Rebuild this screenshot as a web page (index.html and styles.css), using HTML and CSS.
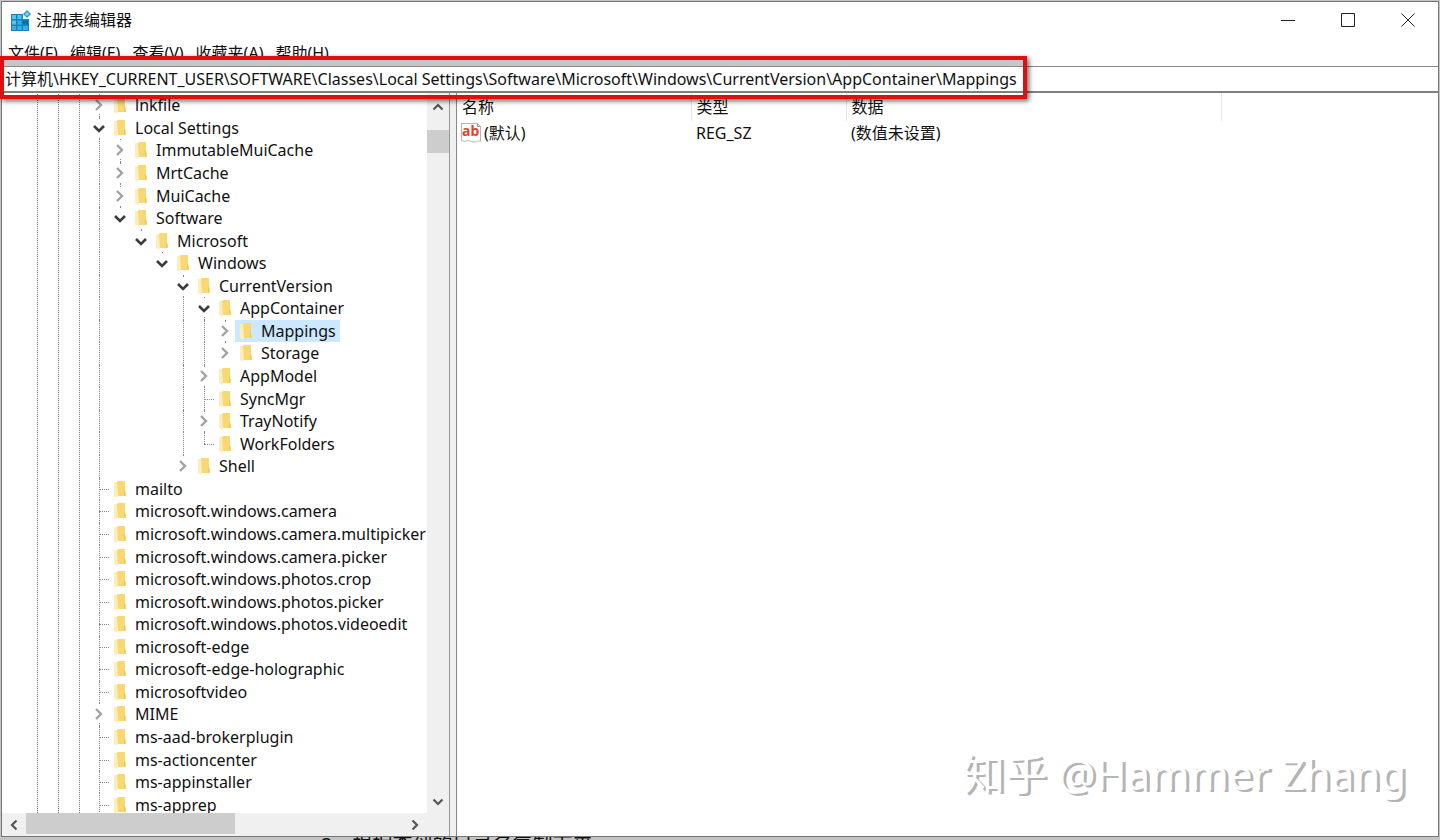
FILE: index.html
```html
<!DOCTYPE html>
<html lang="zh-CN">
<head>
    <meta charset="UTF-8">
    <meta name="viewport" content="width=device-width, initial-scale=1.0">
    <title>注册表编辑器</title>
    <link rel="stylesheet" href="styles.css">
</head>
<body>
    <svg width="0" height="0" class="sprites" aria-hidden="true">
        <symbol id="folder" viewBox="0 0 14 18">
            <path d="M1 2h6v14l-6-1z" fill="#fbe8a6"/>
            <path d="M5 1h7v10l1 1v4H4V2z" fill="#f8d775"/>
            <path d="M1 2h3l1 14-1 2-3-2z" fill="#fdeeb9"/>
            <path d="M11 10h1v6h-1z" fill="#f0c558"/>
        </symbol>
        <symbol id="closed" viewBox="0 0 14 14">
            <path d="M4 2l5 5-5 5" fill="none" stroke="#a2a2a2" stroke-width="2.4"/>
        </symbol>
        <symbol id="open" viewBox="0 0 14 14">
            <path d="M2 5l5 5 5-5" fill="none" stroke="#3c3c3c" stroke-width="2.6"/>
        </symbol>
        <symbol id="arrow" viewBox="0 0 14 14">
            <path d="M2.500 9.500L7 5l4.500 4.500" fill="none" stroke="#555" stroke-width="2.2"/>
        </symbol>
    </svg>

    <div class="window">
        <header class="titlebar">
            <svg class="app-icon" viewBox="0 0 22 22" aria-hidden="true">
                <path d="M1 4h12v5h6v12H1z" fill="#1286c4"/>
                <path d="M2 5h4v4H2zM2 10.500h4v4H2zM7.500 5h4v4h-4z" fill="#55c3ee"/>
                <path d="M7.500 10.500h4v4h-4zM2 16h4v4H2zM7.500 16h4v4h-4zM13 16h5v4h-5z" fill="#38aee2"/>
                <path d="M13 10.500h5v4h-5z" fill="#0b6fae"/>
                <path d="M17 0l4 4-4 4-4-4z" fill="#2a9ad2"/>
                <path d="M17 2l2 2-2 2-2-2z" fill="#8ed6f3"/>
            </svg>
            <h1>注册表编辑器</h1>
            <div class="controls">
                <button type="button" aria-label="最小化"><svg viewBox="0 0 14 14"><path d="M0 7.500h14"/></svg></button>
                <button type="button" aria-label="最大化"><svg viewBox="0 0 14 14"><path d="M.5.5h13v13H.5z"/></svg></button>
                <button type="button" aria-label="关闭"><svg viewBox="0 0 14 14"><path d="M.5.5l13 13M13.500.5l-13 13"/></svg></button>
            </div>
        </header>

        <nav class="menu">
            <button type="button">文件(F)</button>
            <button type="button">编辑(E)</button>
            <button type="button">查看(V)</button>
            <button type="button">收藏夹(A)</button>
            <button type="button">帮助(H)</button>
        </nav>

        <div class="address">
            <input type="text" aria-label="地址" value="计算机\HKEY_CURRENT_USER\SOFTWARE\Classes\Local Settings\Software\Microsoft\Windows\CurrentVersion\AppContainer\Mappings">
            <div class="highlight"></div>
        </div>

        <main class="panes">
            <section class="left">
                <ul class="tree" id="tree"></ul>
                <div class="vbar">
                    <button type="button" aria-label="向上"><svg><use href="#arrow"/></svg></button>
                    <div class="track"><div class="thumb"></div></div>
                    <button type="button" class="down" aria-label="向下"><svg><use href="#arrow"/></svg></button>
                </div>
                <div class="hbar">
                    <button type="button" class="prev" aria-label="向左"><svg><use href="#arrow"/></svg></button>
                    <div class="track"><div class="thumb"></div></div>
                    <button type="button" class="next" aria-label="向右"><svg><use href="#arrow"/></svg></button>
                </div>
            </section>

            <section class="right">
                <table>
                    <colgroup>
                        <col class="c-name"><col class="c-type"><col class="c-data"><col>
                    </colgroup>
                    <thead>
                        <tr><th>名称</th><th>类型</th><th>数据</th><td></td></tr>
                    </thead>
                    <tbody>
                        <tr>
                            <td class="name">
                                <svg viewBox="0 0 22 22" aria-hidden="true">
                                    <path d="M1.500 1.500h16l3 3v15c-3-2-5 2-9 0s-6 1-10-1z" fill="#fff" stroke="#b4b4b4"/>
                                    <path d="M17.500 1.500v3h3" fill="none" stroke="#999"/>
                                    <text x="2" y="14">ab</text>
                                </svg>
                                <span>(默认)</span>
                            </td>
                            <td>REG_SZ</td>
                            <td>(数值未设置)</td>
                            <td></td>
                        </tr>
                    </tbody>
                </table>
                <p class="watermark">知乎 @Hammer Zhang</p>
            </section>
        </main>
    </div>
    <div class="behind">2、根据查到的目录名复制下来</div>

    <script src="tree.js"></script>
</body>
</html>
```
FILE: styles.css
```css
* {
  box-sizing: border-box;
}

body {
  margin: 0;
  height: 100vh;
  display: flex;
  flex-direction: column;
  overflow: hidden;
  padding: 1px 1px 0;
  background-color: #c4c4c4;
  font-family: "Noto Sans", "Noto Sans CJK SC", sans-serif;
  font-size: 16px;
  color: #111;
}

button {
  border: none;
  background: none;
  padding: 0;
  font: inherit;
  color: inherit;
}

.sprites {
  position: absolute;
}

.window {
  flex: 1;
  min-height: 0;
  display: flex;
  flex-direction: column;
  border: 1px solid #777;
  background-color: #fff;
}

.titlebar {
  display: flex;
  align-items: center;
  height: 38px;
  padding-left: 8px;
}

.app-icon {
  width: 22px;
  height: 22px;
}

h1 {
  margin: 0 0 4px 4px;
  font-size: 16px;
  font-weight: normal;
}

.controls {
  margin-left: auto;
  display: flex;
}

.controls button {
  width: 60px;
  height: 38px;
}

.controls svg {
  width: 14px;
  height: 14px;
  fill: none;
  stroke: #222;
}

.menu {
  display: flex;
  gap: 12px;
  height: 26px;
  padding-left: 6px;
  line-height: 24px;
}

/* address bar */
.address {
  position: relative;
  height: 27px;
  border-top: 1px solid #888;
  border-bottom: 2px solid #808080;
}

.address input {
  display: block;
  width: 100%;
  height: 24px;
  border: none;
  outline: none;
  padding: 0 3px 2px;
  font: inherit;
  color: inherit;
}

.highlight {
  position: absolute;
  z-index: 1;
  left: -2px;
  top: -11px;
  width: 1027px;
  height: 43px;
  border: 4px solid #dc1010;
  box-shadow: 2px 2px 5px rgba(0, 0, 0, 0.6);
}

.highlight::before {
  content: "";
  display: block;
  height: 6px;
  background-color: #c6c6c6;
}

.panes {
  flex: 1;
  min-height: 0;
  display: flex;
  background-color: #f0f0f0;
}

.left {
  width: 448px;
  display: grid;
  grid-template-columns: 1fr 22px;
  grid-template-rows: minmax(0, 1fr) 23px;
  border-right: 1px solid #999;
}

/* tree */
.tree {
  list-style: none;
  margin: 0 0 -3px;
  padding: 1px 0 0;
  overflow: hidden;
  display: grid;
  grid-auto-rows: 1fr;
  background-color: #fff;
  background-image:
    repeating-linear-gradient(#fff 0 1px, transparent 1px 2px),
    linear-gradient(90deg, transparent 35px, #777 35px 36px, transparent 36px 56px, #777 56px 57px, transparent 57px 77px, #777 77px 78px, transparent 78px);
}

.row {
  display: flex;
  align-items: center;
  min-height: 0;
  padding-left: 86px;
  white-space: nowrap;
}

.cell {
  position: relative;
  flex: none;
  width: 21px;
  height: 100%;
  display: flex;
  align-items: center;
  justify-content: center;
}

.cell.line::before {
  content: "";
  position: absolute;
  left: 11px;
  top: 0;
  bottom: 0;
  border-left: 1px dotted #888;
}

.cell.line.last::before {
  bottom: 50%;
}

.cell.leaf::after {
  content: "";
  position: absolute;
  left: 11px;
  right: 0;
  top: 50%;
  border-top: 1px dotted #888;
}

.cell svg {
  position: relative;
  width: 14px;
  height: 18px;
  background-color: #fff;
}

.item {
  display: flex;
  align-items: center;
  height: 100%;
  padding: 0 4px;
}

.item svg {
  width: 14px;
  height: 18px;
  margin-right: 8px;
}

.item.selected {
  background-color: #cce8ff;
}

/* scrollbars */
.vbar,
.hbar {
  display: flex;
  background-color: #f0f0f0;
}

.vbar {
  flex-direction: column;
  padding-top: 3px;
}

.hbar {
  position: relative;
  grid-column: 1 / 3;
  padding-right: 22px;
}

.vbar svg,
.hbar svg {
  display: block;
  width: 14px;
  height: 14px;
  margin: auto;
}

.vbar button {
  height: 22px;
}

.hbar button {
  width: 24px;
}

.track {
  flex: 1;
}

.thumb {
  background-color: #cdcdcd;
}

.vbar .thumb {
  height: 23px;
  margin-top: 12px;
}

.hbar .thumb {
  width: 209px;
  height: 21px;
}

.down svg {
  transform: rotate(180deg);
}

.prev svg {
  transform: rotate(-90deg);
}

.next svg {
  transform: rotate(90deg);
}

/* values */
.right {
  flex: 1;
  display: flex;
  flex-direction: column;
  margin-left: 6px;
  border-left: 1px solid #888;
  background-color: #fff;
}

table {
  width: 100%;
  table-layout: fixed;
  border-collapse: collapse;
  line-height: 24px;
}

.c-name {
  width: 234px;
}

.c-type {
  width: 155px;
}

.c-data {
  width: 375px;
}

th,
td {
  height: 24px;
  padding: 0 0 0 5px;
  text-align: left;
  font-weight: normal;
  white-space: nowrap;
}

th {
  height: 28px;
  border-right: 1px solid #e5e5e5;
}

.name {
  display: flex;
  align-items: center;
  padding-left: 3px;
}

.name svg {
  width: 22px;
  height: 22px;
  margin-right: 2px;
}

.name text {
  font-family: "Noto Sans", sans-serif;
  font-size: 14px;
  font-weight: bold;
  fill: #e0452c;
}

.watermark {
  margin: auto 32px 32px auto;
  font-size: 42px;
  line-height: 60px;
  color: #fff;
  text-shadow: 3px 2px 0 #b4b4b4;
}

/* page showing below the window */
.behind {
  height: 3px;
  overflow: hidden;
  padding-left: 320px;
  font-size: 20px;
  line-height: 16px;
}
```
FILE: tree.js
```js
// [depth, state, name]: "+" closed, "-" open, "" no children
const keys = [
  [0, '+', 'lnkfile'],
  [0, '-', 'Local Settings'],
  [1, '+', 'ImmutableMuiCache'],
  [1, '+', 'MrtCache'],
  [1, '+', 'MuiCache'],
  [1, '-', 'Software'],
  [2, '-', 'Microsoft'],
  [3, '-', 'Windows'],
  [4, '-', 'CurrentVersion'],
  [5, '-', 'AppContainer'],
  [6, '+', 'Mappings'],
  [6, '+', 'Storage'],
  [5, '+', 'AppModel'],
  [5, '', 'SyncMgr'],
  [5, '+', 'TrayNotify'],
  [5, '', 'WorkFolders'],
  [4, '+', 'Shell'],
  [0, '', 'mailto'],
  [0, '', 'microsoft.windows.camera'],
  [0, '', 'microsoft.windows.camera.multipicker'],
  [0, '', 'microsoft.windows.camera.picker'],
  [0, '', 'microsoft.windows.photos.crop'],
  [0, '', 'microsoft.windows.photos.picker'],
  [0, '', 'microsoft.windows.photos.videoedit'],
  [0, '', 'microsoft-edge'],
  [0, '', 'microsoft-edge-holographic'],
  [0, '', 'microsoftvideo'],
  [0, '+', 'MIME'],
  [0, '', 'ms-aad-brokerplugin'],
  [0, '', 'ms-actioncenter'],
  [0, '', 'ms-appinstaller'],
  [0, '', 'ms-apprep']
];
const selected = 'Mappings';

// does the branch at this depth go on below row i?
function goesOn(i, depth) {
  if (depth === 0) return true;
  for (let j = i + 1; j < keys.length; j++) {
    if (keys[j][0] < depth) return false;
    if (keys[j][0] === depth) return true;
  }
  return false;
}

document.getElementById('tree').innerHTML = keys.map(function([depth, state, name], i) {
  let cells = '';
  for (let d = 0; d < depth; d++) {
    cells += '<span class="cell' + (goesOn(i, d) ? ' line' : '') + '"></span>';
  }
  const cls = 'cell line' + (goesOn(i, depth) ? '' : ' last') + (state ? '' : ' leaf');
  const icon = state ? '<svg><use href="#' + (state === '+' ? 'closed' : 'open') + '"/></svg>' : '';
  return '<li class="row">' + cells + '<span class="' + cls + '">' + icon + '</span>' +
    '<span class="item' + (name === selected ? ' selected' : '') + '">' +
    '<svg><use href="#folder"/></svg>' + name + '</span></li>';
}).join('');
```
